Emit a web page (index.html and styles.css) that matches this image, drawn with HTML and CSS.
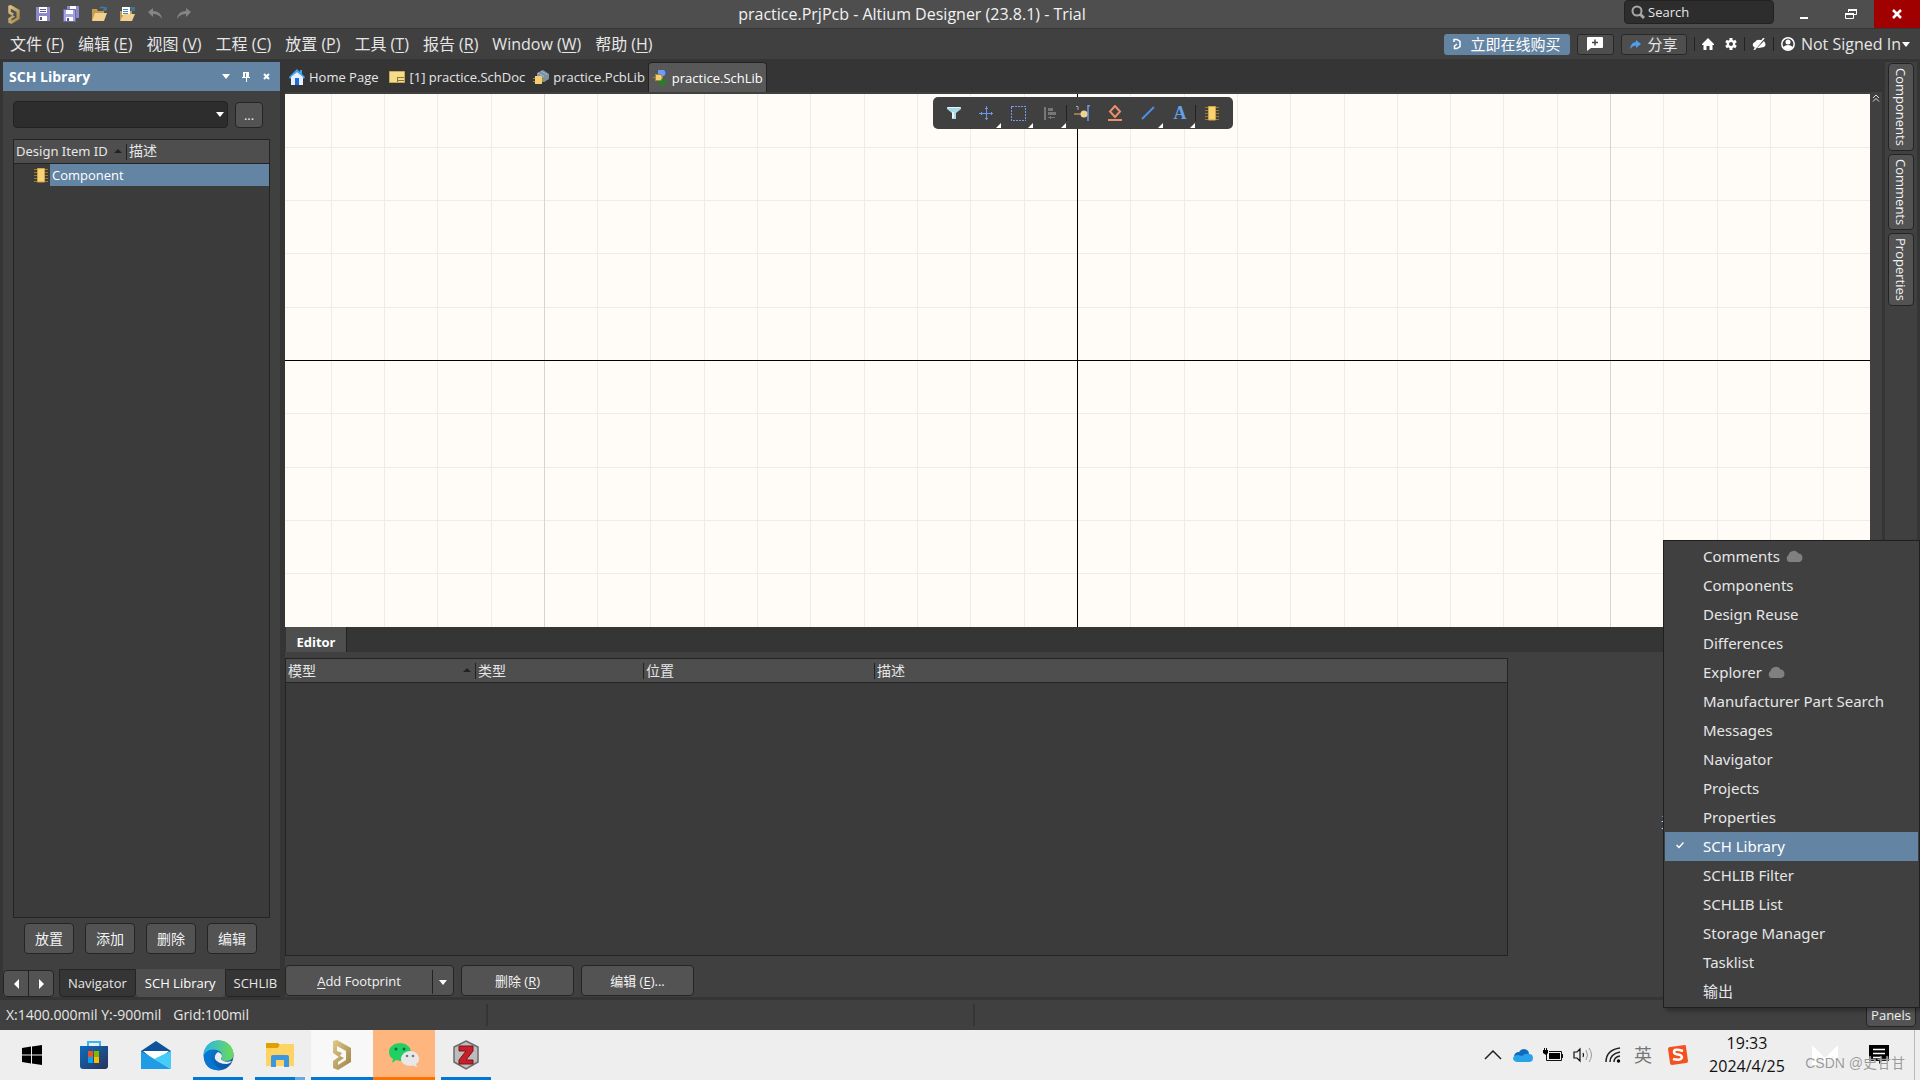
FILE: index.html
```html
<!DOCTYPE html>
<html lang="zh-CN">
<head>
<meta charset="utf-8">
<title>practice.PrjPcb - Altium Designer (23.8.1) - Trial</title>
<link rel="stylesheet" href="styles.css">
</head>
<body>
<svg class="defs" aria-hidden="true">
  <defs>
    <linearGradient id="gold" x1="0" y1="0" x2="1" y2="1"><stop offset="0" stop-color="#e0c98a"/><stop offset="1" stop-color="#9c8145"/></linearGradient>
    <linearGradient id="edgeTop" x1="0" y1="0" x2="1" y2="0"><stop offset="0" stop-color="#2bb5e8"/><stop offset="1" stop-color="#6ddb55"/></linearGradient>
    <linearGradient id="edgeLow" x1="0" y1="0" x2="1" y2="1"><stop offset="0" stop-color="#0a84e0"/><stop offset="1" stop-color="#0a4f9c"/></linearGradient>
    <linearGradient id="store" x1="0" y1="0" x2="1" y2="1"><stop offset="0" stop-color="#0d6cc0"/><stop offset="1" stop-color="#2b3358"/></linearGradient>
    <symbol id="altium" viewBox="0 0 20 30"><path fill="url(#gold)" d="M1 1 5 0 19 8V22L6 30 1 28V21L8 16 12 18 6 22V25L14 20V11L5 6V11L10 13 7 17 1 13Z"/></symbol>
    <symbol id="chip" viewBox="0 0 14 16"><path stroke="#9a7b28" stroke-width="1" d="M0 2.5H14M0 5.5H14M0 8.5H14M0 11.5H14M0 14.500H14"/><path fill="#f6d27a" stroke="#d3a53c" d="M3.500 1.500H10.500V15H3.500Z"/></symbol>
    <symbol id="cloud" viewBox="0 0 18 12"><path fill="#808080" d="M4 12a4 4 0 0 1-.5-7A5.500 5.500 0 0 1 13.500 3.500 4.300 4.300 0 0 1 14 12Z"/></symbol>
  </defs>
</svg>
<div class="app">
  <header class="titlebar">
    <div class="quick">
      <svg class="logo" width="14" height="19"><use href="#altium"/></svg>
      <button aria-label="Save"><svg width="16" height="16" viewBox="0 0 16 16"><path fill="#8c89c8" d="M1 1H15V15H1Z"/><path fill="#fff" d="M4 1H12V7H4ZM4 10H12V15H4Z"/><path fill="#55529a" d="M5 11H7V14H5ZM5 3H11V4H5ZM5 5H11V6H5Z"/></svg></button>
      <button aria-label="Save All"><svg width="16" height="16" viewBox="0 0 16 16"><path fill="#8c89c8" d="M4 0H16V12H4Z"/><path fill="#fff" d="M7 0H13V4H7Z"/><path fill="#a5a2dd" stroke="#6c69ab" d="M.5 3.500H12.500V15.500H.5Z"/><path fill="#fff" d="M3 4H10V8H3ZM3 11H10V15H3Z"/><path fill="#55529a" d="M4 12H6V15H4Z"/></svg></button>
      <button aria-label="Open"><svg width="17" height="16" viewBox="0 0 17 16"><path fill="#c79c50" d="M1 3H6L7 5H13V14H1Z"/><path fill="#f3d08e" d="M4 7H16L13 15H1Z"/><path fill="none" stroke="#3d7c9e" stroke-width="1.500" d="M9 2Q13 0 15 4M15 1V4H12"/></svg></button>
      <button aria-label="Open Document"><svg width="17" height="16" viewBox="0 0 17 16"><path fill="#c79c50" d="M1 5H13V14H1Z"/><path fill="#fff" d="M3 1H11V9H3Z"/><path stroke="#4b88b5" d="M4 3.500H9M4 5.500H9M4 7.500H9"/><path fill="#f3d08e" d="M5 8H16L13 15H1Z"/><path fill="none" stroke="#3d7c9e" stroke-width="1.500" d="M11 2Q14 1 15 4M15 1V4H12"/></svg></button>
      <button aria-label="Undo"><svg width="15" height="12" viewBox="0 0 15 12"><path fill="#858585" d="M0 4 5 0V3Q13 3 14 11 11 6 5 6V9Z"/></svg></button>
      <button aria-label="Redo"><svg width="15" height="12" viewBox="0 0 15 12"><path fill="#858585" d="M15 4 10 0V3Q2 3 1 11 4 6 10 6V9Z"/></svg></button>
    </div>
    <h1 class="title">practice.PrjPcb - Altium Designer (23.8.1) - Trial</h1>
    <div class="winctl">
      <label class="search"><svg width="14" height="14" viewBox="0 0 14 14"><circle cx="6" cy="6" r="4.500" fill="none" stroke="#a8a8a8" stroke-width="2"/><path stroke="#a8a8a8" stroke-width="3" d="M9 9 13 13"/></svg><input type="text" placeholder="Search" aria-label="Search"></label>
      <button class="wbtn" aria-label="Minimize"><svg width="12" height="12" viewBox="0 0 12 12"><path fill="#fff" d="M2 9H10V11H2Z"/></svg></button>
      <button class="wbtn" aria-label="Restore"><svg width="12" height="12" viewBox="0 0 12 12"><path fill="none" stroke="#fff" d="M3.500 4V1.500H11.500V6.500H9M.5 5.500H8.500V10.500H.5Z"/><path fill="#fff" d="M3 1H12V3H3ZM0 5H9V7H0Z"/></svg></button>
      <button class="wbtn close" aria-label="Close"><svg width="10" height="10" viewBox="0 0 10 10"><path stroke="#fff" stroke-width="2.500" d="M1 1 9 9M9 1 1 9"/></svg></button>
    </div>
  </header>
  <div class="menubar">
    <nav class="menus">
      <button>文件 (<u>F</u>)</button><button>编辑 (<u>E</u>)</button><button>视图 (<u>V</u>)</button><button>工程 (<u>C</u>)</button><button>放置 (<u>P</u>)</button><button>工具 (<u>T</u>)</button><button>报告 (<u>R</u>)</button><button>Window (<u>W</u>)</button><button>帮助 (<u>H</u>)</button>
    </nav>
    <div class="account">
      <button class="buy"><svg width="8" height="12" viewBox="0 0 8 12"><path fill="none" stroke="#fff" stroke-width="1.500" d="M1 4V1.500H4L7 3.500V8.500L4 10.500H1.500V8L4 6"/></svg>立即在线购买</button>
      <button class="flat" aria-label="Add comment"><svg width="16" height="14" viewBox="0 0 16 14"><path fill="#fff" d="M1 0H15Q16 0 16 1V10Q16 11 15 11H4L0 14V1Q0 0 1 0Z"/><path stroke="#444" stroke-width="1.500" d="M8 2.500V8.500M5 5.500H11"/></svg></button>
      <button class="flat share"><svg width="11" height="9" viewBox="0 0 11 9"><path fill="#4da0f0" d="M11 4 6 0V2Q1 2 0 9 3 5 6 5.500V8Z"/></svg>分享</button>
      <span class="sep"></span>
      <button class="home" aria-label="Home"><svg width="12" height="12" viewBox="0 0 12 12"><path fill="#fff" d="M6 0 12 6V7H10.500V12H7.500V8H4.500V12H1.500V7H0V6Z"/></svg></button>
      <button aria-label="Settings"><svg width="12" height="12" viewBox="0 0 12 12"><path fill="none" stroke="#fff" stroke-width="3" d="M6 0V12M1 3 11 9M11 3 1 9"/><circle cx="6" cy="6" r="4.300" fill="#fff"/><circle cx="6" cy="6" r="2" fill="#404040"/></svg></button>
      <span class="sep"></span>
      <button aria-label="Offline"><svg width="14" height="12" viewBox="0 0 14 12"><path fill="#fff" d="M1 8Q0 5 3 4 5 1 8 2L10 2 3 10ZM12 3Q15 7 12 9L7 10H5Z"/><path stroke="#fff" stroke-width="1.500" d="M12 0 2 12"/></svg></button>
      <span class="sep"></span>
      <button class="signin"><svg width="14" height="14" viewBox="0 0 14 14"><circle cx="7" cy="7" r="6.200" fill="none" stroke="#fff" stroke-width="1.500"/><circle cx="7" cy="5" r="2.500" fill="#fff"/><path fill="#fff" d="M2 10Q7 6 12 10 10 13 7 13T2 10Z"/></svg>Not Signed In<i class="caret"></i></button>
    </div>
  </div>

  <div class="workspace">
    <aside class="panel">
      <div class="panel-head"><h2>SCH Library</h2>
        <button aria-label="Panel menu"><i class="caret"></i></button>
        <button aria-label="Pin"><svg width="8" height="10" viewBox="0 0 8 10"><path fill="#fff" d="M1 0H7V5H8V6H5V10H4V6H0V5H1Z"/><path fill="#6384a3" d="M3 1H4V5H3Z"/></svg></button>
        <button aria-label="Close panel"><svg width="7" height="7" viewBox="0 0 7 7"><path stroke="#fff" stroke-width="2" d="M1 1 6 6M6 1 1 6"/></svg></button>
      </div>
      <div class="filter"><div class="combo"><select aria-label="Component filter"><option></option></select><i class="caret"></i></div><button class="btn more">...</button></div>
      <div class="list">
        <table>
          <thead><tr><th class="idcol">Design Item ID<i class="sort"></i></th><th>描述</th></tr></thead>
          <tbody><tr><td colspan="2"><div class="item"><svg width="14" height="16"><use href="#chip"/></svg><span>Component</span></div></td></tr></tbody>
        </table>
      </div>
      <div class="actions"><button class="btn">放置</button><button class="btn">添加</button><button class="btn">删除</button><button class="btn">编辑</button></div>
      <div class="ptabs">
        <div class="btn arrows"><button aria-label="Previous tab"><svg width="5" height="10"><path fill="#fff" d="M5 0V10L0 5Z"/></svg></button><button aria-label="Next tab"><svg width="5" height="10"><path fill="#fff" d="M0 0V10L5 5Z"/></svg></button></div>
        <button class="ptab">Navigator</button><button class="ptab on">SCH Library</button><button class="ptab">SCHLIB</button>
      </div>
    </aside>

    <main class="center">
      <div class="doctabs">
        <button><svg width="16" height="16" viewBox="0 0 16 16"><path fill="#3fa0f4" d="M8 0 11 3V1H13V5L16 8 15 10 8 3 1 10 0 8Z"/><path fill="#e6efff" d="M2 8 8 3 14 8V16H2Z"/><path fill="#2467d8" d="M6 9H10V16H6Z"/></svg>Home Page</button>
        <button class="sheet"><svg width="16" height="12" viewBox="0 0 16 12"><path fill="#f5dc8b" stroke="#c9a951" d="M.5 .5H15.500V11.500H.5Z"/><path stroke="#8a7534" d="M9 6.500H15M9 9.500H15M8.500 6V11"/></svg>[1] practice.SchDoc</button>
        <button><svg width="16" height="14" viewBox="0 0 16 14"><path fill="#7d93a3" d="M4 3 10 0 16 4V9L11 12 4 7Z"/><path stroke="#c5d4dd" stroke-dasharray="1 1" d="M5 3 12 7M8 1 15 5"/><path stroke="#a58636" d="M0 8.500H12M0 11.500H12"/><path fill="#f2cf75" d="M2 6H9V14H2Z"/></svg>practice.PcbLib</button>
        <button class="on"><svg width="15" height="16" viewBox="0 0 15 16"><path fill="#2d7a2c" d="M4 9H13L14 13 10 16 5 14Z"/><path stroke="#2455b8" d="M2 1.500H14M5 3.500H15"/><path fill="#6d9cf0" d="M5 0H11Q14 3 11 6H5Z"/><path fill="#f2cf75" stroke="#a58636" d="M2.500 4.500H8Q11 7 8 10.500H2.500ZM0 7.500H2"/></svg>practice.SchLib</button>
      </div>
      <div class="canvas-row">
        <div class="canvas">
          <svg class="grid" viewBox="0 0 1585 533" preserveAspectRatio="xMidYMid slice" shape-rendering="crispEdges">
            <path stroke="#ececec" d="M46.500 0V533M99.500 0V533M152.500 0V533M206.500 0V533M312.500 0V533M365.500 0V533M419.500 0V533M472.500 0V533M525.500 0V533M579.500 0V533M632.500 0V533M685.500 0V533M739.500 0V533M845.500 0V533M899.500 0V533M952.500 0V533M1005.500 0V533M1059.500 0V533M1112.500 0V533M1165.500 0V533M1218.500 0V533M1272.500 0V533M1378.500 0V533M1432.500 0V533M1485.500 0V533M1538.500 0V533M0 53.500H1585M0 106.500H1585M0 159.500H1585M0 213.500H1585M0 319.500H1585M0 373.500H1585M0 426.500H1585M0 479.500H1585"/>
            <path stroke="#d4d4d2" d="M259.500 0V533M1325.500 0V533"/>
            <path stroke="#000" d="M792.500 0V533M0 266.500H1585"/>
          </svg>
          <div class="toolbar">
            <button aria-label="Filter"><svg width="14" height="12" viewBox="0 0 14 12"><path fill="#a9d9e6" d="M0 0H14V2L9 6V12H5V6L0 2Z"/><path fill="#e4f6fa" d="M1 0H13V1H1ZM5 5H7V11H5Z"/></svg></button>
            <button class="dd" aria-label="Snap"><svg width="14" height="14" viewBox="0 0 14 14"><path stroke="#6e96e8" d="M7.500 0V14M0 7.500H14M6 2.500H9M6 12.500H9M2.500 6V9M12.500 6V9"/></svg></button>
            <button class="dd" aria-label="Select"><svg width="15" height="15" viewBox="0 0 15 15" shape-rendering="crispEdges"><path fill="none" stroke="#7898f0" stroke-dasharray="2 1" d="M.5 .5H14.500V14.500H.5Z"/></svg></button>
            <button class="dd line" aria-label="Align"><svg width="13" height="13" viewBox="0 0 13 13"><path fill="#777" d="M0 0H2V13H0ZM4 1H9V4H4ZM4 5H12V8H4Z"/><path stroke="#777" d="M4 10.500H11M6.500 9V12"/></svg></button>
            <button aria-label="Pin"><svg width="17" height="16" viewBox="0 0 17 16"><path stroke="#b09158" stroke-width="1.500" d="M0 9H8"/><path fill="none" stroke="#6e96e8" stroke-width="1.500" d="M16 .8H14V16"/><circle cx="10" cy="9" r="3.500" fill="#ecd293"/><path fill="none" stroke="#aaa" d="M2 1.500H4V5"/></svg></button>
            <button aria-label="IEEE symbol"><svg width="14" height="16" viewBox="0 0 14 16"><path fill="none" stroke="#ea8e6c" stroke-width="2" d="M7 1 12 6.500 7 12 2 6.500Z"/><path fill="#ea8e6c" d="M0 14H14V16H0Z"/></svg></button>
            <button class="dd" aria-label="Line"><svg width="14" height="14" viewBox="0 0 14 14"><path stroke="#4a90e0" stroke-width="2" d="M1 13 13 1"/></svg></button>
            <button class="dd line letter" aria-label="Text string">A</button>
            <button aria-label="Part"><svg width="14" height="16"><use href="#chip"/></svg></button>
          </div>
        </div>
        <div class="gutter"><svg width="8" height="8" viewBox="0 0 8 8"><path fill="none" stroke="#ddd" d="M1 4 4 1 7 4M1 7.500 4 4.500 7 7.500"/></svg></div>
      </div>
      <section class="editor">
        <div class="etabs"><button>Editor</button></div>
        <div class="ebody">
          <div class="models">
            <table><thead><tr><th class="c1">模型<i class="sort"></i></th><th class="c2">类型</th><th class="c3">位置</th><th>描述</th></tr></thead></table>
          </div>
          <div class="preview">无法预览</div>
        </div>
        <div class="ebuttons">
          <div class="btn split"><button class="add"><u>A</u>dd Footprint</button><button class="drop" aria-label="More footprint options"><i class="caret"></i></button></div>
          <button class="btn">删除 (<u>R</u>)</button><button class="btn">编辑 (<u>E</u>)...</button>
        </div>
      </section>
    </main>
    <aside class="side"><button class="btn">Components</button><button class="btn">Comments</button><button class="btn">Properties</button></aside>
  </div>

  <footer class="status">
    <div class="readout"><span>X:1400.000mil Y:-900mil</span><span>Grid:100mil</span></div>
    <span class="cell"></span><button class="btn panels">Panels</button>
  </footer>

  <ul class="popup">
    <li><button>Comments<svg width="18" height="12"><use href="#cloud"/></svg></button></li>
    <li><button>Components</button></li>
    <li><button>Design Reuse</button></li>
    <li><button>Differences</button></li>
    <li><button>Explorer<svg width="18" height="12"><use href="#cloud"/></svg></button></li>
    <li><button>Manufacturer Part Search</button></li>
    <li><button>Messages</button></li>
    <li><button>Navigator</button></li>
    <li><button>Projects</button></li>
    <li><button>Properties</button></li>
    <li><button class="on"><svg class="tick" width="8" height="7" viewBox="0 0 8 7"><path fill="none" stroke="#fff" stroke-width="1.500" d="M.5 3 3 5.500 7.500 .5"/></svg>SCH Library</button></li>
    <li><button>SCHLIB Filter</button></li>
    <li><button>SCHLIB List</button></li>
    <li><button>Storage Manager</button></li>
    <li><button>Tasklist</button></li>
    <li><button>输出</button></li>
  </ul>
</div>

<div class="taskbar">
  <div class="apps">
    <button aria-label="Start"><svg width="20" height="20" viewBox="0 0 20 20"><path d="M0 3 9 1.600V9.500H0ZM10 1.400 20 0V9.500H10ZM0 10.500H9V18.400L0 17ZM10 10.500H20V20L10 18.600Z"/></svg></button>
    <button aria-label="Store"><svg width="30" height="30" viewBox="0 0 30 30"><path fill="none" stroke="#38b5f5" stroke-width="2" d="M9 8V2H21V8"/><path fill="url(#store)" d="M1 6H29V26Q29 29 26 29H4Q1 29 1 26Z"/><path fill="#f25022" d="M9 11H14V17H9Z"/><path fill="#7fba00" d="M15 11H20V17H15Z"/><path fill="#00a4ef" d="M9 17H14V23H9Z"/><path fill="#ffb900" d="M15 17H20V23H15Z"/></svg></button>
    <button aria-label="Mail"><svg width="32" height="30" viewBox="0 0 32 30"><path fill="#0f5299" d="M1 11 16 1 31 11V20H1Z"/><path fill="#fff" d="M3 11H29L16 22Z"/><path fill="#1f9ce4" d="M1 11 16 20 31 29H1Z"/><path fill="#45cdf7" d="M31 11V29L14 19Z"/></svg></button>
    <button class="run" aria-label="Edge"><svg width="31" height="31" viewBox="0 0 31 31"><circle cx="15.500" cy="15.500" r="15" fill="url(#edgeLow)"/><path fill="url(#edgeTop)" d="M1 13Q3 1 16 .5 28 1 30.500 13 31 21 23 21 17 21 19 17 20 12 14 10 6 8 1 15Z"/><path fill="#0876cf" d="M1 15Q4 9 10 10.500 6 15 9 21T19 29Q4 33 1 19Z"/><path fill="#eee" d="M15 12Q21 14 18 19 21 23 29 21 27 24 24 24 15 24 12 19 11 15 15 12Z"/></svg></button>
    <button class="run multi" aria-label="File Explorer"><svg width="28" height="24" viewBox="0 0 28 24"><path fill="#e0a100" d="M0 0H12L14 2 12 5H0Z"/><path fill="#fdd463" d="M0 5H12L15 1H28V23H0Z"/><path fill="#3a96dd" d="M5 24V14Q5 12 7 12H21Q23 12 23 14V24H18V17H10V24Z"/></svg></button>
    <button class="run current" aria-label="Altium Designer"><svg width="20" height="30"><use href="#altium"/></svg></button>
    <button class="run alert" aria-label="WeChat"><svg width="30" height="26" viewBox="0 0 30 26"><path fill="#22cf64" d="M11 1C17 1 22 5 22 10S17 19 11 19L7 18 3 21 4 17C1 15 0 13 0 10 0 5 5 1 11 1Z"/><circle cx="7" cy="7" r="1.500" fill="#116b36"/><circle cx="15" cy="7" r="1.500" fill="#116b36"/><path fill="#e8e8e8" d="M21 9C26 9 30 12 30 17 30 19 29 21 27 22L28 25 24 23.500C17 25 12 21 12 17S16 9 21 9Z"/><circle cx="18" cy="14" r="1.300" fill="#777"/><circle cx="24" cy="14" r="1.300" fill="#777"/></svg></button>
    <button class="run" aria-label="Z app"><svg width="26" height="30" viewBox="0 0 26 30"><path fill="#bdbdbd" stroke="#6b6b6b" stroke-width="1.500" d="M13 1 25 7V22L13 29 1 22V7Z"/><path fill="#c8202a" stroke="#7c1218" d="M6 6H20V11L13 20H20V24H6V20L13 11H6Z"/></svg></button>
  </div>
  <div class="tray">
    <button aria-label="Hidden icons"><svg width="18" height="10" viewBox="0 0 18 10"><path fill="none" stroke="#222" stroke-width="1.500" d="M1 9 9 1 17 9"/></svg></button>
    <button aria-label="OneDrive"><svg width="20" height="14" viewBox="0 0 20 14"><path fill="#0f6cbd" d="M1 8Q2 4 6 4 9-1 14 2 16 3 16 6L8 12Z"/><path fill="#28a3ea" d="M4 14Q0 13 0 10 1 7 5 7L9 8Q12 5 16 6 20 6 20 10T16 14Z"/></svg></button>
    <button aria-label="Battery"><svg width="20" height="14" viewBox="0 0 20 14"><path fill="none" stroke="#111" d="M3.500 6V12.500H18.500V3.500H6M19.500 6V10"/><path d="M6 5H17V11H6ZM0 2H5V5L3 7 0 5Z"/><path stroke="#111" d="M1.500 0V2M3.500 0V2"/></svg></button>
    <button aria-label="Volume"><svg width="20" height="16" viewBox="0 0 20 16"><path fill="none" stroke="#111" stroke-width="1.200" d="M1 5H4L7 2V14L4 11H1ZM10 6Q11 8 10 10"/><path fill="none" stroke="#999" d="M13 3Q16 8 13 13M16 1Q21 8 16 15"/></svg></button>
    <button aria-label="Network"><svg width="16" height="16" viewBox="0 0 16 16"><path fill="none" stroke="#222" stroke-width="1.500" d="M1 15Q1 3 15 1M5 15Q5 7 15 5M9 15Q9 10 15 9"/><circle cx="13.500" cy="14" r="1.700"/></svg></button>
    <button class="ime">英</button>
    <button aria-label="Sogou input"><svg width="20" height="20" viewBox="0 0 20 20"><path fill="#f4511e" d="M0 4Q0 2 2 2L17 0Q18 0 18 2L20 16Q20 18 18 18L4 20Q2 20 2 18Z"/><path fill="none" stroke="#fff" stroke-width="2.500" d="M15 6Q6 3 6 7 6 9 10 9.500 14 10 14 12.500 13 16 5 14"/></svg></button>
    <div class="clock"><span>19:33</span><span>2024/4/25</span></div>
    <button class="mlogo" aria-label="M assistant"><svg width="26" height="20" viewBox="0 0 26 20"><path fill="#fff" d="M0 20V0L13 13 26 0V20H21V11L13 19 5 11V20Z"/></svg></button>
    <button aria-label="Notifications"><svg width="20" height="20" viewBox="0 0 20 20"><path d="M0 0H20V16H13L10 19 10 16H0Z"/><path stroke="#fff" stroke-width="1.500" d="M4 4.500H16M4 8.500H16M4 12.500H12"/></svg></button>
  </div>
  <span class="watermark">CSDN @史甘甘</span>
</div>
</body>
</html>
```
FILE: styles.css
```css
* { box-sizing: border-box; }
body {
  margin: 0;
  height: 100vh;
  display: flex;
  flex-direction: column;
  overflow: hidden;
  background: #353535;
  color: #e6e6e6;
  font: 13px/20px "Open Sans", "Noto Sans CJK SC", sans-serif;
}
button {
  margin: 0;
  padding: 0;
  border: 0;
  background: none;
  color: inherit;
  font: inherit;
  white-space: nowrap;
  display: flex;
  align-items: center;
  justify-content: center;
}
u { text-underline-offset: 2px; }
svg { flex: none; display: block; }
table { border-collapse: collapse; width: 100%; table-layout: fixed; }
.defs { position: absolute; width: 0; height: 0; }
.app { flex: 1; min-height: 0; display: flex; flex-direction: column; position: relative; }
.caret { border: 4px solid transparent; border-top: 5px solid #fff; border-bottom: 0; }
.sort { border: 4px solid transparent; border-bottom: 4px solid #222; border-top: 0; }
.btn { background: #535353; border: 1px solid #242424; border-radius: 4px; color: #f2f2f2; }

/* title bar */
.titlebar {
  height: 29px;
  display: grid;
  grid-template-columns: 1fr auto 1fr;
  align-items: center;
  background: #4e4e4e;
  border-bottom: 1px solid #353535;
}
.quick { display: flex; align-items: center; padding-left: 7px; }
.quick .logo { margin-right: 8px; }
.quick button { width: 28px; height: 28px; }
.title { margin: 0; padding-right: 96px; font-size: 16px; font-weight: 400; color: #f2f2f2; }
.winctl { display: flex; justify-content: flex-end; align-self: stretch; }
.search {
  width: 150px;
  height: 24px;
  margin-right: 6px;
  padding: 0 6px;
  display: flex;
  align-items: center;
  gap: 3px;
  background: #2d2d2d;
  border: 1px solid #222;
  border-radius: 4px;
}
.search input { width: 100%; padding: 0; border: 0; background: none; font: inherit; color: #e6e6e6; outline: 0; }
.search input::placeholder { color: #e6e6e6; opacity: 1; }
.wbtn { width: 47px; }
.close { background: #a10000; width: 46px; }

/* menu bar */
.menubar { height: 30px; display: flex; justify-content: space-between; align-items: center; background: #404040; font-size: 16px; }
.menus { display: flex; gap: 14px; padding-left: 10px; }
.account { display: flex; align-items: center; gap: 7px; padding-right: 10px; }
.buy { width: 126px; height: 21px; gap: 9px; background: #6384a3; border-radius: 3px; color: #fff; font-size: 15px; }
.flat { width: 37px; height: 21px; background: #4e4e4e; border: 1px solid #282828; border-radius: 3px; font-size: 15px; }
.share { width: 66px; gap: 6px; }
.sep { width: 1px; height: 14px; background: #222; }
.home { margin-right: 4px; }
.signin { gap: 6px; }
.signin .caret { margin-left: -5px; }

/* workspace */
.workspace { flex: 1; min-height: 0; display: flex; padding: 3px; }
.panel { width: 277px; margin-right: 5px; display: flex; flex-direction: column; background: #404040; }
.panel-head { height: 29px; display: flex; align-items: center; gap: 4px; padding: 0 6px; background: #6384a3; }
.panel-head h2 { flex: 1; margin: 0; font-size: 14px; color: #fff; }
.panel-head button { width: 16px; height: 16px; }
.filter { display: flex; align-items: center; gap: 7px; padding: 10px 10px 11px; }
.combo { position: relative; width: 215px; height: 27px; }
.combo select { appearance: none; width: 100%; height: 100%; background: #2d2d2d; border: 1px solid #222; border-radius: 4px; }
.combo .caret { position: absolute; right: 4px; top: 11px; }
.more { width: 28px; height: 26px; }
.list { flex: 1; margin: 0 10px; background: #3b3b3b; border: 1px solid #232323; }
th { padding: 0 2px; text-align: left; font-weight: 400; background: #4e4e4e; border-bottom: 1px solid #232323; height: 23px; position: relative; font-size: 14px; line-height: 20px; }
th + th::before { content: ""; position: absolute; left: -1px; top: 4px; height: 16px; width: 1px; background: #222; }
td { padding: 0; }
.idcol { width: 113px; font: 13px/20px "Noto Sans", sans-serif; }
.sort { position: absolute; right: 5px; top: 9px; }
.item { display: flex; align-items: center; height: 22px; padding-left: 20px; gap: 2px; }
.item span { flex: 1; background: #6384a3; line-height: 22px; padding-left: 2px; color: #fff; }
.actions { display: flex; gap: 11px; padding: 5px 21px 15px; font-size: 14px; }
.actions .btn { width: 50px; height: 31px; }
.ptabs { display: flex; height: 28px; overflow: hidden; }
.arrows { display: flex; width: 51px; margin: 1px 5px 0 0; flex: none; }
.arrows button { flex: 1; }
.arrows button + button { border-left: 1px solid #222; }
.ptab { flex: none; padding: 0 8px; background: #353535; border: 1px solid #242424; border-radius: 0 0 4px 4px; }
.ptab.on { background: #4e4e4e; border-color: #4e4e4e; color: #fff; }

.center { flex: 1; min-width: 0; display: flex; flex-direction: column; }
.doctabs { height: 32px; display: flex; gap: 2px; padding: 0 3px; border-bottom: 2px solid #404040; }
.doctabs button { gap: 4px; padding: 0 1px; }
.doctabs .sheet { gap: 5px; margin: 0 4px 0 6px; }
.doctabs .on { background: #585858; border: 1px solid #222; border-bottom: 0; border-radius: 4px 4px 0 0; padding: 0 3px 0 4px; color: #fff; }
.canvas-row { flex: 1; min-height: 0; display: flex; }
.canvas { flex: 1; min-width: 0; position: relative; background: #fffcf8; }
.grid { position: absolute; width: 100%; height: 100%; }
.toolbar {
  position: absolute;
  top: 3px;
  left: calc(50% + 5px);
  transform: translateX(-50%);
  display: flex;
  width: 300px;
  height: 32px;
  padding: 0 4px 0 5px;
  background: #404040;
  border-radius: 5px;
}
.toolbar button { flex: 1; position: relative; }
.toolbar .dd::after { content: ""; position: absolute; right: 1px; bottom: 1px; border-left: 5px solid transparent; border-bottom: 5px solid #fff; }
.toolbar .line::before { content: ""; position: absolute; right: 0; top: 8px; width: 1px; height: 16px; background: #222; }
.toolbar .letter { font: bold 18px/20px "Liberation Serif", serif; color: #62a0ec; }
.gutter { width: 12px; background: #404040; padding: 0 2px; }

.editor { background: #404040; display: flex; flex-direction: column; }
.etabs { height: 25px; background: #353535; display: flex; }
.etabs button { width: 61px; margin-left: 1px; padding-top: 4px; background: #4e4e4e; border-right: 1px solid #222; color: #fff; font-weight: 700; }
.ebody { display: flex; margin-top: 6px; }
.models { flex: 1; height: 298px; background: #3b3b3b; border: 1px solid #232323; }
.models th { padding-top: 1px; }
.c1 { width: 190px; }
.c2 { width: 168px; }
.c3 { width: 231px; }
.preview { width: 362px; margin-right: 12px; display: flex; align-items: center; justify-content: center; padding-top: 30px; font-size: 14px; }
.ebuttons { display: flex; gap: 7px; padding: 9px 0 1px; }
.ebuttons .btn { width: 113px; height: 31px; }
.ebuttons .split { display: flex; width: 169px; }
.add { flex: 1; }
.drop { width: 21px; margin: 4px 0 1px; border-left: 1px solid #222; }

.side { width: 32px; margin-left: 3px; padding: 1px 3px; background: #404040; display: flex; flex-direction: column; gap: 3px; }
.side .btn { writing-mode: vertical-rl; width: 26px; padding: 4px 0; }

/* status bar */
.status { height: 30px; display: flex; align-items: center; background: #404040; padding: 0 4px 0 6px; }
.readout { display: flex; gap: 12px; width: 480px; font-size: 14px; }
.cell { flex: 1; height: 22px; border-left: 2px solid #353535; background: linear-gradient(#353535, #353535) 485px 0 / 2px 100% no-repeat; }
.panels { width: 50px; height: 24px; align-self: flex-start; margin-top: 3px; }

/* panel chooser */
.popup {
  position: absolute;
  right: 0;
  bottom: 22px;
  width: 257px;
  margin: 0;
  padding: 1px;
  list-style: none;
  background: #404040;
  border: 1px solid #1f1f1f;
  box-shadow: 3px 3px 4px rgba(0, 0, 0, .3);
  font: 15px/20px "Noto Sans", "Noto Sans CJK SC", sans-serif;
}
.popup button { width: 100%; height: 29px; justify-content: flex-start; padding: 0 0 2px 38px; gap: 5px; position: relative; }
.popup .on { background: #6384a3; color: #fff; }
.tick { position: absolute; left: 11px; top: 10px; }

/* system taskbar */
.taskbar { height: 50px; display: flex; justify-content: space-between; background: #eee; color: #111; position: relative; }
.apps { display: flex; padding-left: 1px; }
.apps button { width: 62px; position: relative; }
.run::after { content: ""; position: absolute; left: 6px; right: 6px; bottom: 0; height: 3px; background: #0078d7; }
.multi::after { background: linear-gradient(90deg, #0078d7 80%, #63aae6 80%); }
.current { background: #f8f8f8; }
.alert { background: #ffb57e; }
.current::after, .alert::after { left: 0; right: 0; }
.alert::after { background: #ff7200; }
.tray { display: flex; align-items: center; padding-right: 20px; margin-right: 5px; border-right: 1px solid #bbb; }
.tray button { width: 30px; height: 100%; }
.tray .ime { margin-right: 5px; font-size: 18px; color: #777; }
.tray .clock { width: 98px; margin-left: 5px; display: flex; flex-direction: column; align-items: center; font-size: 16px; line-height: 23px; }
.tray .mlogo { width: 58px; margin-right: 10px; }
.watermark { position: absolute; right: 15px; bottom: 6px; font: 14px/22px "Liberation Sans", "Noto Sans CJK SC", sans-serif; color: #999; text-shadow: 0 0 1px #fff; }
```
